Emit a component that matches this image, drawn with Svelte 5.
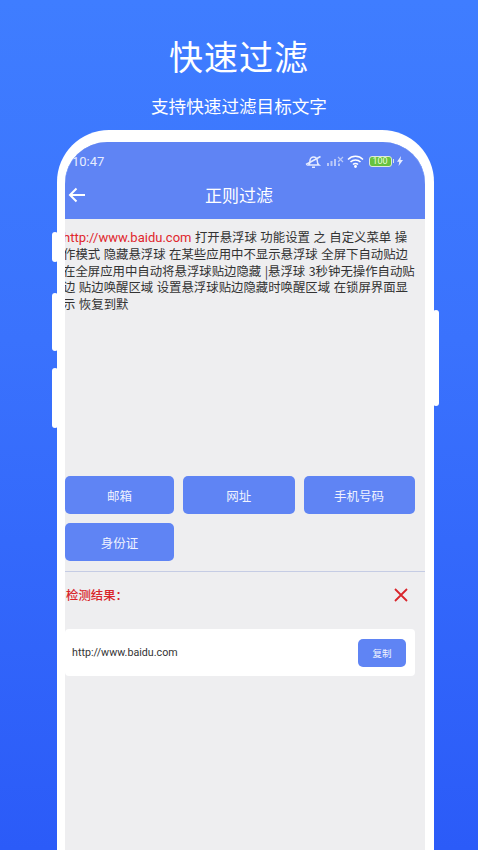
<script>
    const filters = ["邮箱", "网址", "手机号码", "身份证"];
    const url = "http://www.baidu.com";
    const lines = [
        " 打开悬浮球 功能设置 之 自定义菜单 操",
        "作模式 隐藏悬浮球 在某些应用中不显示悬浮球 全屏下自动贴边",
        "在全屏应用中自动将悬浮球贴边隐藏 |悬浮球 3秒钟无操作自动贴",
        "边 贴边唤醒区域 设置悬浮球贴边隐藏时唤醒区域 在锁屏界面显",
        "示 恢复到默"
    ];
</script>

<div class="page">
    <h1>快速过滤</h1>
    <p class="sub">支持快速过滤目标文字</p>

    <div class="phone">
        <i class="side l1"></i>
        <i class="side l2"></i>
        <i class="side l3"></i>
        <i class="side r1"></i>

        <div class="screen">
            <div class="head">
                <div class="status">
                    <span class="time">10:47</span>
                    <div class="icons">
                        <svg width="17" height="15" viewBox="0 0 17 15" fill="none" stroke="#e6ecff" stroke-width="1.500">
                            <path d="M3.500 11c1.300-1 1.500-2.500 1.500-4.500a3.600 3.600 0 0 1 7.200 0c0 2 .5 3.500 1.800 4.500z" />
                            <path d="M7 13.200h3" />
                            <path d="M1 10.500 15.500 2.500" />
                        </svg>
                        <svg width="17" height="10" viewBox="0 0 17 10" fill="#b9c8f8">
                            <rect x="0" y="7" width="2" height="3" />
                            <rect x="3.500" y="5" width="2" height="5" />
                            <rect x="7" y="3" width="2" height="7" />
                            <path d="M11 1 16 6M16 1l-5 5" stroke="#b9c8f8" stroke-width="1.200" />
                            <rect x="11" y="7.500" width="2" height="2.500" />
                        </svg>
                        <svg width="17" height="13" viewBox="0 0 17 13" fill="none" stroke="#fff" stroke-width="1.500">
                            <path d="M1 4.500a10.500 10.500 0 0 1 15 0" />
                            <path d="M3.500 7a7 7 0 0 1 10 0" />
                            <path d="M6 9.500a3.500 3.500 0 0 1 5 0" />
                            <circle cx="8.500" cy="11.500" r=".7" fill="#fff" />
                        </svg>
                        <span class="batt">100</span>
                        <i class="cap"></i>
                        <svg class="bolt" width="6" height="10" viewBox="0 0 6 10" fill="#e6ecff">
                            <path d="M4 0 0 5.800h2.200L1.600 10 6 4H3.500z" />
                        </svg>
                    </div>
                </div>
                <div class="bar">
                    <svg class="back" width="18" height="16" viewBox="0 0 18 16" fill="none" stroke="#fff" stroke-width="2">
                        <path d="M17 8H2M8.500 1.500 2 8l6.500 6.500" />
                    </svg>
                    <span>正则过滤</span>
                </div>
            </div>

            <div class="content">
                <div class="text">
                    {#each lines as line, i}
                        <div class="line">{#if i === 0}<span class="link">{url}</span>{/if}{line}</div>
                    {/each}
                </div>

                <div class="grid">
                    {#each filters as f}
                        <button>{f}</button>
                    {/each}
                </div>

                <div class="result">
                    <span class="label">检测结果：</span>
                    <svg width="14" height="14" viewBox="0 0 14 14" stroke="#d9252b" stroke-width="1.800" fill="none">
                        <path d="M1 1l12 12M13 1 1 13" />
                    </svg>
                </div>

                <div class="card">
                    <span>{url}</span>
                    <button class="copy">复制</button>
                </div>
            </div>
        </div>
    </div>
</div>

<style>
    :global(body) {
        margin: 0;
    }

    .page {
        height: 850px;
        overflow: hidden;
        background: linear-gradient(180deg, #3f7dff 0%, #3a72fd 40%, #2b5bf8 100%);
        font-family: "Noto Sans CJK SC", "Noto Sans", sans-serif;
        color: #fff;
        text-align: center;
    }

    h1 {
        margin: 0;
        padding-top: 33px;
        font-size: 34px;
        line-height: 46px;
        font-weight: 400;
        letter-spacing: 1px;
    }

    .sub {
        margin: 15px 0 0;
        font-size: 17.600px;
        line-height: 24px;
    }

    .phone {
        position: relative;
        box-sizing: border-box;
        width: 377px;
        height: 760px;
        margin: 12px 0 0 57px;
        border: solid #fff;
        border-width: 12px 9px 0 8px;
        border-radius: 52px 52px 0 0;
    }

    .side {
        position: absolute;
        width: 6px;
        background: #fff;
        border-radius: 3px;
    }

    .l1 { left: -13px; top: 90px; height: 30px; }
    .l2 { left: -13px; top: 151px; height: 58px; }
    .l3 { left: -13px; top: 226px; height: 60px; }
    .r1 { right: -14px; top: 168px; height: 96px; }

    .screen {
        height: 100%;
        overflow: hidden;
        background: #eeeef0;
        border-radius: 42px 42px 0 0;
    }

    .head {
        height: 77px;
        background: #5f84f4;
    }

    .status {
        display: flex;
        align-items: center;
        justify-content: space-between;
        height: 38px;
        padding: 0 22px 0 7px;
    }

    .time {
        font-family: "Roboto", sans-serif;
        font-size: 13px;
        color: #e6ecff;
    }

    .icons {
        display: flex;
        align-items: center;
        gap: 3px;
    }

    .icons svg:nth-child(2) {
        margin-left: 2px;
    }

    .batt {
        box-sizing: border-box;
        width: 23px;
        height: 11px;
        margin-left: 2px;
        border: 1px solid #dfeadb;
        border-radius: 3px;
        background: #67c23f;
        font-family: "Roboto", sans-serif;
        font-size: 9px;
        line-height: 9px;
        color: #eaffd9;
    }

    .cap {
        width: 1.500px;
        height: 4px;
        margin-left: -2px;
        background: #dfeadb;
    }

    .bar {
        position: relative;
        text-align: center;
        font-size: 17px;
        line-height: 30px;
        padding-right: 12px;
    }

    .back {
        position: absolute;
        left: 3px;
        top: 7px;
    }

    .content {
        color: #333;
    }

    .text {
        box-sizing: border-box;
        height: 257px;
        margin-left: -2px;
        padding-top: 10px;
        font-size: 12.400px;
        line-height: 16.400px;
        word-spacing: 0.700px;
        text-align: left;
    }

    .line {
        white-space: pre;
    }

    .link {
        color: #e0262c;
        font-family: "Roboto", sans-serif;
        font-size: 13px;
        word-spacing: 0;
    }

    .grid {
        display: grid;
        grid-template-columns: 109px 111.500px 111px;
        column-gap: 9px;
        row-gap: 9px;
        height: 85px;
        padding-bottom: 10px;
        border-bottom: 1px solid #c5cce4;
    }

    button {
        height: 38px;
        padding: 0;
        border: none;
        border-radius: 5px;
        background: #5f84f4;
        color: #f0f3ff;
        font-family: inherit;
        font-size: 12.500px;
    }

    .result {
        display: flex;
        align-items: center;
        justify-content: space-between;
        height: 45px;
        padding: 0 17px 0 1px;
    }

    .label {
        color: #d9252b;
        font-size: 12.400px;
        font-weight: 500;
    }

    .card {
        display: flex;
        align-items: center;
        justify-content: space-between;
        box-sizing: border-box;
        width: 350px;
        height: 47px;
        margin-top: 12px;
        padding: 0 9px 0 7px;
        background: #fff;
        border-radius: 4px;
        font-family: "Roboto", sans-serif;
        font-size: 10.700px;
        color: #333;
    }

    .copy {
        width: 48px;
        height: 28px;
        font-family: "Noto Sans CJK SC", sans-serif;
        font-size: 9.500px;
    }
</style>
